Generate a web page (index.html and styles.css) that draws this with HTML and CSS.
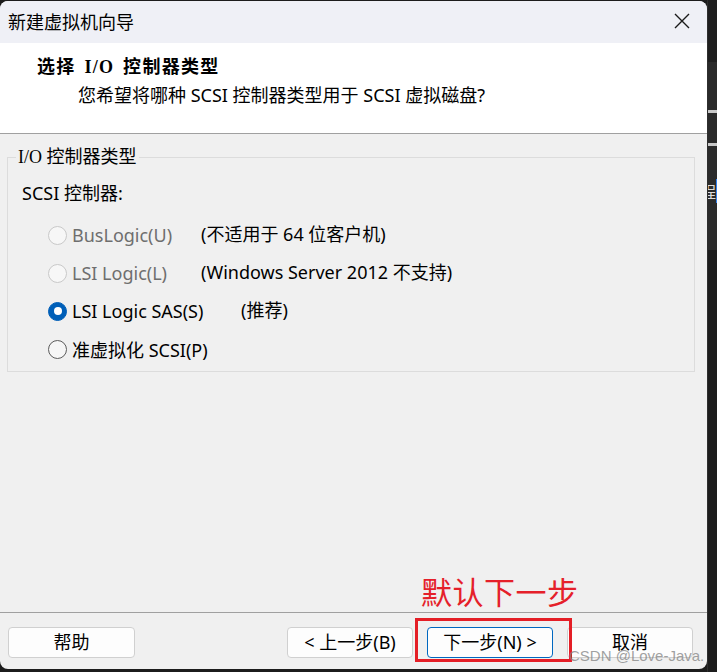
FILE: index.html
```html
<!DOCTYPE html>
<html lang="zh-CN">
<head>
<meta charset="utf-8">
<title>新建虚拟机向导</title>
<link rel="stylesheet" href="styles.css">
</head>
<body>
<div class="screen">
  <div class="window">
    <div class="titlebar">
      <span class="title">新建虚拟机向导</span>
      <svg class="close" width="16" height="16" viewBox="0 0 16 16"><path d="M1 1 L15 15 M15 1 L1 15" stroke="#1a1a1a" stroke-width="1.4" fill="none"/></svg>
    </div>
    <div class="header">
      <div class="heading">选择 I/O 控制器类型</div>
      <div class="subtitle">您希望将哪种 SCSI 控制器类型用于 SCSI 虚拟磁盘?</div>
    </div>
    <div class="content">
      <fieldset class="group">
        <legend>I/O 控制器类型</legend>
        <div class="label">SCSI 控制器:</div>
        <div class="options">
          <div class="option disabled"><span class="radio"></span><span>BusLogic(U)</span></div>
          <div class="note">(不适用于 64 位客户机)</div>
          <div class="option disabled"><span class="radio"></span><span>LSI Logic(L)</span></div>
          <div class="note">(Windows Server 2012 不支持)</div>
          <div class="option"><span class="radio checked"></span><span>LSI Logic SAS(S)</span></div>
          <div class="note indent">(推荐)</div>
          <div class="option"><span class="radio"></span><span>准虚拟化 SCSI(P)</span></div>
          <div class="note"></div>
        </div>
      </fieldset>
      <div class="annotation">默认下一步</div>
    </div>
    <div class="footer">
      <button class="btn">帮助</button>
      <div class="spacer"></div>
      <button class="btn">&lt; 上一步(B)</button>
      <button class="btn default">下一步(N) &gt;</button>
      <button class="btn">取消</button>
      <div class="redbox"></div>
      <div class="watermark">CSDN @Love-Java.</div>
    </div>
  </div>
  <div class="side">
    <div class="band b1"></div>
    <div class="band b2"></div>
    <div class="band line"></div>
    <div class="band b3"></div>
    <div class="band line"></div>
    <div class="band b4"><span class="glyph">程</span></div>
    <div class="band b5"></div>
  </div>
</div>
</body>
</html>
```
FILE: styles.css
```css
* { box-sizing: border-box; }
html, body { margin: 0; padding: 0; }
body {
  background: #1c1c1c;
  font-family: "Noto Sans", "Noto Sans CJK SC", sans-serif;
  font-size: 18px;
  color: #000;
}
.screen {
  display: flex;
  width: 717px;
  height: 672px;
  overflow: hidden;
}
.window {
  width: 707px;
  height: 668px;
  margin-top: 1px;
  display: flex;
  flex-direction: column;
  background: #f0f0f0;
  border-radius: 8px;
  overflow: hidden;
  flex: none;
}
.titlebar {
  height: 42px;
  background: #eff0f6;
  display: flex;
  align-items: center;
  justify-content: space-between;
  padding: 0 17px 0 8px;
}
.title {
  font-family: "Noto Sans CJK SC", sans-serif;
  font-size: 18px;
  color: #000;
  line-height: 24px;
  margin-top: -2px;
}
.close { width: 16px; height: 16px; margin-top: -2px; }
.header {
  height: 91px;
  background: #fff;
  border-bottom: 1px solid #a0a0a0;
  padding-top: 12px;
}
.heading {
  font-family: "Liberation Serif", "Noto Sans CJK SC", serif;
  font-weight: bold;
  font-size: 18px;
  line-height: 24px;
  padding-left: 37px;
  letter-spacing: 1.3px;
  word-spacing: 3px;
}
.subtitle {
  font-size: 18px;
  line-height: 24px;
  padding-left: 78px;
  margin-top: 4px;
  white-space: nowrap;
}
.content {
  flex: 1;
  position: relative;
  padding-top: 11px;
}
.group {
  margin: 0 12px 0 7px;
  border: 1px solid #dcdcdc;
  padding: 0 0 3px 14px;
  min-width: 0;
}
.group legend {
  font-family: "Liberation Serif", "Noto Sans CJK SC", serif;
  font-size: 18px;
  line-height: 24px;
  padding: 0 2px;
  margin-left: -6px;
}
.label {
  line-height: 24px;
  margin-top: 12px;
}
.options {
  display: grid;
  grid-template-columns: 153px auto;
  grid-auto-rows: 38px;
  margin-top: 11px;
  padding-left: 26px;
}
.option {
  display: flex;
  align-items: center;
  gap: 5px;
  white-space: nowrap;
  min-width: 0;
}
.option.disabled { color: #6e6e6e; }
.note {
  display: flex;
  align-items: center;
  padding-bottom: 5px;
  white-space: nowrap;
}
.note.indent { padding-left: 40px; }
.radio {
  width: 19px;
  height: 19px;
  border-radius: 50%;
  border: 1px solid #5c5c5c;
  background: #f6f6f6;
  flex: none;
  display: flex;
  align-items: center;
  justify-content: center;
}
.disabled .radio {
  border-color: #c9c9c9;
  background: #f7f7f7;
}
.radio.checked {
  background: #005fb8;
  border-color: #005fb8;
}
.radio.checked::after {
  content: "";
  width: 8px;
  height: 8px;
  border-radius: 50%;
  background: #fff;
}
.annotation {
  position: absolute;
  left: 421px;
  top: 439px;
  font-family: "Noto Sans CJK SC", sans-serif;
  font-size: 31px;
  line-height: 36px;
  color: #e5202a;
  letter-spacing: 0.5px;
}
.footer {
  height: 57px;
  border-top: 1px solid #a0a0a0;
  display: flex;
  align-items: flex-start;
  gap: 14px;
  padding: 14px 14px 0 8px;
  position: relative;
}
.spacer { flex: 1; }
.btn {
  width: 126px;
  height: 31px;
  background: #fdfdfd;
  border: 1px solid #d0d0d0;
  border-radius: 4px;
  font-family: "Noto Sans", "Noto Sans CJK SC", sans-serif;
  font-size: 18px;
  color: #000;
  padding: 0;
  line-height: 29px;
  white-space: nowrap;
}
.btn:first-child { width: 127px; }
.btn.default { border-color: #0067c0; }
.redbox {
  position: absolute;
  left: 415px;
  top: 5px;
  width: 157px;
  height: 44px;
  border: 3px solid #e41e26;
}
.watermark {
  position: absolute;
  left: 569px;
  top: 34px;
  font-family: "Liberation Sans", sans-serif;
  font-size: 15px;
  line-height: 18px;
  color: rgba(130, 130, 130, 0.75);
  white-space: nowrap;
}
.side {
  width: 10px;
  display: flex;
  flex-direction: column;
  flex: none;
  border-left: 1px solid #2e2e2e;
}
.band { flex: none; }
.b1 { height: 62px; background: #1e1e1e; }
.b2 { height: 48px; background: #2a2a2a; }
.line { height: 3px; background: #c8c8c8; }
.b3 { height: 30px; background: #2a2a2a; }
.b4 {
  height: 104px;
  background: #2b2b2b;
  color: #ddd;
  font-family: "Noto Sans CJK SC", sans-serif;
  font-size: 16px;
  line-height: 20px;
  padding-top: 35px;
  overflow: hidden;
  white-space: nowrap;
  text-indent: -8px;
}
.glyph { border-right: 2px solid #2f80ed; }
.b5 { flex: 1; background: #1c1c1c; }
```
